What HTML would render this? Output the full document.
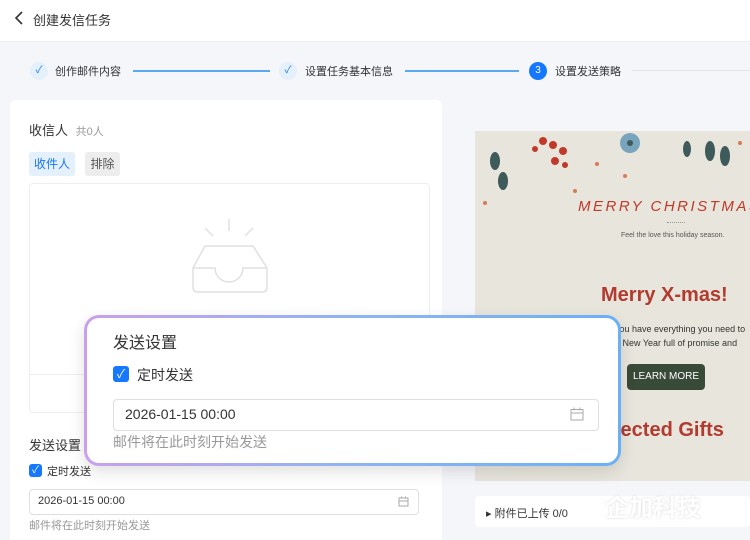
<!DOCTYPE html>
<html><head><meta charset="utf-8"><style>
*{margin:0;padding:0;box-sizing:border-box}
body{width:750px;height:540px;overflow:hidden;background:#f5f6fa;font-family:"Liberation Sans","Noto Sans CJK SC",sans-serif;position:relative;color:#333}
.abs{position:absolute}
.hdr{left:0;top:0;width:750px;height:42px;background:#fff;border-bottom:1px solid #eceef2}
.step{font-size:11px;color:#333;top:63px}
.circ{width:18px;height:18px;border-radius:50%;top:62px;font-size:10px;text-align:center;line-height:18px}
.line{height:1.5px;background:#5aa8f0;top:70px}
.card{background:#fff}
.cb{width:13px;height:13px;border-radius:3px;background:#1677ff;color:#fff;font-size:10px;line-height:13px;text-align:center}
.inp{border:1px solid #dcdfe4;border-radius:4px;background:#fff}
</style></head><body>
<div class="abs hdr"></div>
<svg class="abs" style="left:14px;top:11px" width="10" height="14"><path d="M8 1L2 7l6 6" stroke="#333" stroke-width="1.6" fill="none"/></svg>
<div class="abs" style="left:33px;top:10px;font-size:13px;color:#333">创建发信任务</div>

<div class="abs circ" style="left:30px;background:#e4f0fc;color:#1677ff">✓</div>
<div class="abs step" style="left:55px">创作邮件内容</div>
<div class="abs line" style="left:133px;width:137px"></div>
<div class="abs circ" style="left:279px;background:#e4f0fc;color:#1677ff">✓</div>
<div class="abs step" style="left:305px">设置任务基本信息</div>
<div class="abs line" style="left:405px;width:114px"></div>
<div class="abs circ" style="left:529px;background:#1677ff;color:#fff">3</div>
<div class="abs step" style="left:555px">设置发送策略</div>
<div class="abs" style="left:632px;top:70px;width:118px;height:1px;background:#e3e5ea"></div>

<div class="abs card" style="left:10px;top:100px;width:432px;height:440px;border-radius:6px 6px 0 0"></div>
<div class="abs" style="left:29px;top:120px;font-size:13px;color:#333">收信人 <span style="font-size:11px;color:#999;margin-left:4px">共0人</span></div>
<div class="abs" style="left:29px;top:152px;width:46px;height:24px;background:#e4f0fc;border-radius:3px;color:#1677ff;font-size:12px;text-align:center;line-height:24px">收件人</div>
<div class="abs" style="left:85px;top:152px;width:35px;height:24px;background:#ededed;border-radius:3px;color:#555;font-size:12px;text-align:center;line-height:24px">排除</div>
<div class="abs" style="left:29px;top:183px;width:401px;height:230px;border:1px solid #eceef0;border-radius:4px"></div>
<div class="abs" style="left:30px;top:374px;width:399px;height:1px;background:#eceef0"></div>
<svg class="abs" style="left:190px;top:218px" width="80" height="78" fill="none" stroke="#e0e0e0" stroke-width="1.5">
<path d="M39 1v12M15 10l8 8M63 10l-8 8"/>
<path d="M15 28h48l14 22v20a4 4 0 0 1-4 4H7a4 4 0 0 1-4-4V50z"/>
<path d="M3 50h22a14 14 0 0 0 28 0h24"/>
</svg>
<div class="abs" style="left:29px;top:435px;font-size:13px;color:#333">发送设置</div>
<div class="abs cb" style="left:29px;top:464px">✓</div>
<div class="abs" style="left:47px;top:463px;font-size:11px;color:#333">定时发送</div>
<div class="abs inp" style="left:29px;top:489px;width:390px;height:26px"></div>
<div class="abs" style="left:38px;top:495px;font-size:11px;color:#333">2026-01-15 00:00</div>
<svg class="abs" style="left:398px;top:496px" width="11" height="11" fill="none" stroke="#aaa"><rect x="1" y="2" width="9" height="8"/><path d="M1 5h9M3.5 0.5v2M7.5 0.5v2"/></svg>
<div class="abs" style="left:29px;top:517px;font-size:11px;color:#999">邮件将在此时刻开始发送</div>

<div class="abs" style="left:475px;top:131px;width:275px;height:350px;background:#e8e6dc;overflow:hidden">
 <svg width="275" height="90" class="abs" style="left:0;top:0">
  <g fill="#3e5a5a"><ellipse cx="20" cy="30" rx="5" ry="9"/><ellipse cx="28" cy="50" rx="5" ry="9"/><ellipse cx="235" cy="20" rx="5" ry="10"/><ellipse cx="250" cy="25" rx="5" ry="10"/><ellipse cx="212" cy="18" rx="4" ry="8"/></g>
  <g fill="#c0392b"><circle cx="68" cy="10" r="4"/><circle cx="78" cy="14" r="4"/><circle cx="88" cy="20" r="4"/><circle cx="80" cy="30" r="4"/><circle cx="90" cy="34" r="3"/><circle cx="60" cy="18" r="3"/></g>
  <g fill="#5c93b5"><circle cx="155" cy="12" r="10" opacity=".8"/><circle cx="155" cy="12" r="3" fill="#3e5a5a"/></g>
  <g fill="#d67a5a"><circle cx="100" cy="60" r="2"/><circle cx="150" cy="45" r="2"/><circle cx="265" cy="12" r="2"/><circle cx="122" cy="33" r="2"/><circle cx="10" cy="72" r="2"/></g>
 </svg>
 <div class="abs" style="left:103px;top:67px;font-size:15px;letter-spacing:2.5px;color:#c0392b;font-style:italic;white-space:nowrap">MERRY CHRISTMAS</div>
 <div class="abs" style="left:192px;top:91px;width:18px;border-top:1px dotted #999"></div>
 <div class="abs" style="left:146px;top:101px;font-size:7px;color:#555;white-space:nowrap">Feel the love this holiday season.</div>
 <div class="abs" style="left:126px;top:153px;font-size:20px;font-weight:bold;color:#b33a2e;white-space:nowrap">Merry X-mas!</div>
 <div class="abs" style="left:140px;top:191px;font-size:9px;color:#333;white-space:nowrap;line-height:14px">you have everything you need to<br>a New Year full of promise and</div>
 <div class="abs" style="left:152px;top:233px;width:78px;height:26px;background:#3a4a38;border-radius:4px;color:#fff;font-size:10px;text-align:center;line-height:26px">LEARN MORE</div>
 <div class="abs" style="left:140px;top:288px;font-size:20px;font-weight:bold;color:#b33a2e;white-space:nowrap">lected Gifts</div>
</div>
<div class="abs" style="left:475px;top:496px;width:275px;height:31px;background:#fff;border-radius:4px"></div>
<div class="abs" style="left:486px;top:505px;font-size:11px;color:#333">▸ 附件已上传 0/0</div>
<div class="abs" style="left:605px;top:488px;font-size:24px;font-weight:bold;color:#fff;opacity:.85;text-shadow:0 0 2px #ccc">企加科技</div>

<div class="abs" style="left:84px;top:315px;width:537px;height:151px;border-radius:15px;background:linear-gradient(90deg,#c9a0ec,#8fb4f2 50%,#6ab0f6);padding:3px;box-shadow:0 6px 16px rgba(0,0,0,.12)">
 <div style="width:100%;height:100%;background:#fff;border-radius:12px;position:relative">
  <div class="abs" style="left:26px;top:11px;font-size:16px;color:#333">发送设置</div>
  <div class="abs cb" style="left:26px;top:48px;width:16px;height:16px;line-height:16px;font-size:12px">✓</div>
  <div class="abs" style="left:50px;top:47px;font-size:14px;color:#333">定时发送</div>
  <div class="abs inp" style="left:26px;top:81px;width:486px;height:32px"></div>
  <div class="abs" style="left:38px;top:88px;font-size:14px;color:#333">2026-01-15 00:00</div>
  <svg class="abs" style="left:483px;top:89px" width="14" height="14" fill="none" stroke="#aaa"><rect x="1" y="2.5" width="12" height="10.5"/><path d="M1 6h12M4 0.5v3M10 0.5v3"/></svg>
  <div class="abs" style="left:26px;top:114px;font-size:14px;color:#999">邮件将在此时刻开始发送</div>
 </div>
</div>
</body></html>
